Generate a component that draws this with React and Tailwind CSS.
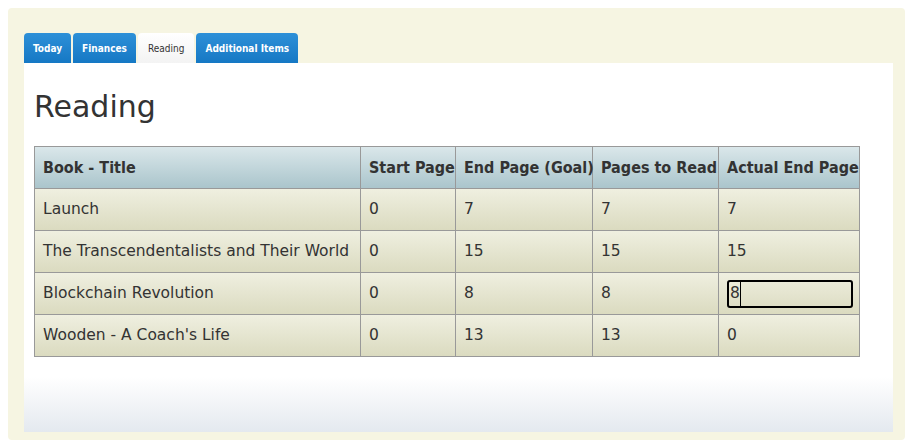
import React from 'react';

const rows = [
    ['Launch', '0', '7', '7', '7'],
    ['The Transcendentalists and Their World', '0', '15', '15', '15'],
    ['Blockchain Revolution', '0', '8', '8', null],
    ["Wooden - A Coach's Life", '0', '13', '13', '0'],
];

const cols = ['w-[326px]', 'w-[95px]', 'w-[137px]', 'w-[126px]', 'w-[141px]'];

export default function App() {
    return (
        <div className="w-[913px] h-[448px] bg-white p-2" style={{ fontFamily: '"DejaVu Sans", sans-serif' }}>
            <div className="h-[432px] bg-[#f6f5e2] rounded px-4 pt-[25px]">
                <div className="flex gap-[2px] h-[30px] items-end">
                    {['Today', 'Finances', 'Reading', 'Additional Items'].map(t => (
                        <div
                            key={t}
                            className={t === 'Reading'
                                ? 'h-[30px] px-[10px] flex items-center text-[10px] text-[#333] bg-gradient-to-b from-white to-[#f3f3f3] rounded-t'
                                : 'h-[30px] px-[9px] flex items-center text-[10px] font-bold text-white bg-gradient-to-b from-[#2d90d8] to-[#1578c4] rounded-t'}
                            style={{ fontFamily: '"DejaVu Sans Condensed", "DejaVu Sans", sans-serif' }}
                        >
                            {t}
                        </div>
                    ))}
                </div>
                <div className="h-[369px] w-[869px] bg-gradient-to-b from-white from-85% to-[#e4e9ef] px-[10px] pt-[26px]">
                    <h1 className="text-[30px] leading-[36px] text-[#333] mb-[21px]">Reading</h1>
                    <table className="table-fixed w-[825px] border-collapse text-[15.5px] text-[#333]">
                        <thead>
                            <tr className="h-[42px] bg-gradient-to-b from-[#dae7ea] to-[#a9c4cb]">
                                {['Book - Title', 'Start Page', 'End Page (Goal)', 'Pages to Read', 'Actual End Page'].map((h, i) => (
                                    <th
                                        key={h}
                                        className={`${cols[i]} border border-[#999] px-2 text-left font-bold whitespace-nowrap text-[16px]`}
                                        style={{ fontFamily: '"DejaVu Sans Condensed", "DejaVu Sans", sans-serif' }}
                                    >
                                        {h}
                                    </th>
                                ))}
                            </tr>
                        </thead>
                        <tbody>
                            {rows.map(r => (
                                <tr key={r[0]} className="h-[42px] bg-gradient-to-b from-[#efefe0] to-[#dadabf]">
                                    {r.map((c, i) => (
                                        <td key={i} className="border border-[#999] px-2 whitespace-nowrap overflow-hidden">
                                            {c === null ? (
                                                <div className="h-[28px] w-[126px] border-2 border-black rounded-[3px] flex items-center pl-[1px]">
                                                    <span>8</span><span className="w-px h-[24px] bg-black"></span>
                                                </div>
                                            ) : c}
                                        </td>
                                    ))}
                                </tr>
                            ))}
                        </tbody>
                    </table>
                </div>
            </div>
        </div>
    );
}
